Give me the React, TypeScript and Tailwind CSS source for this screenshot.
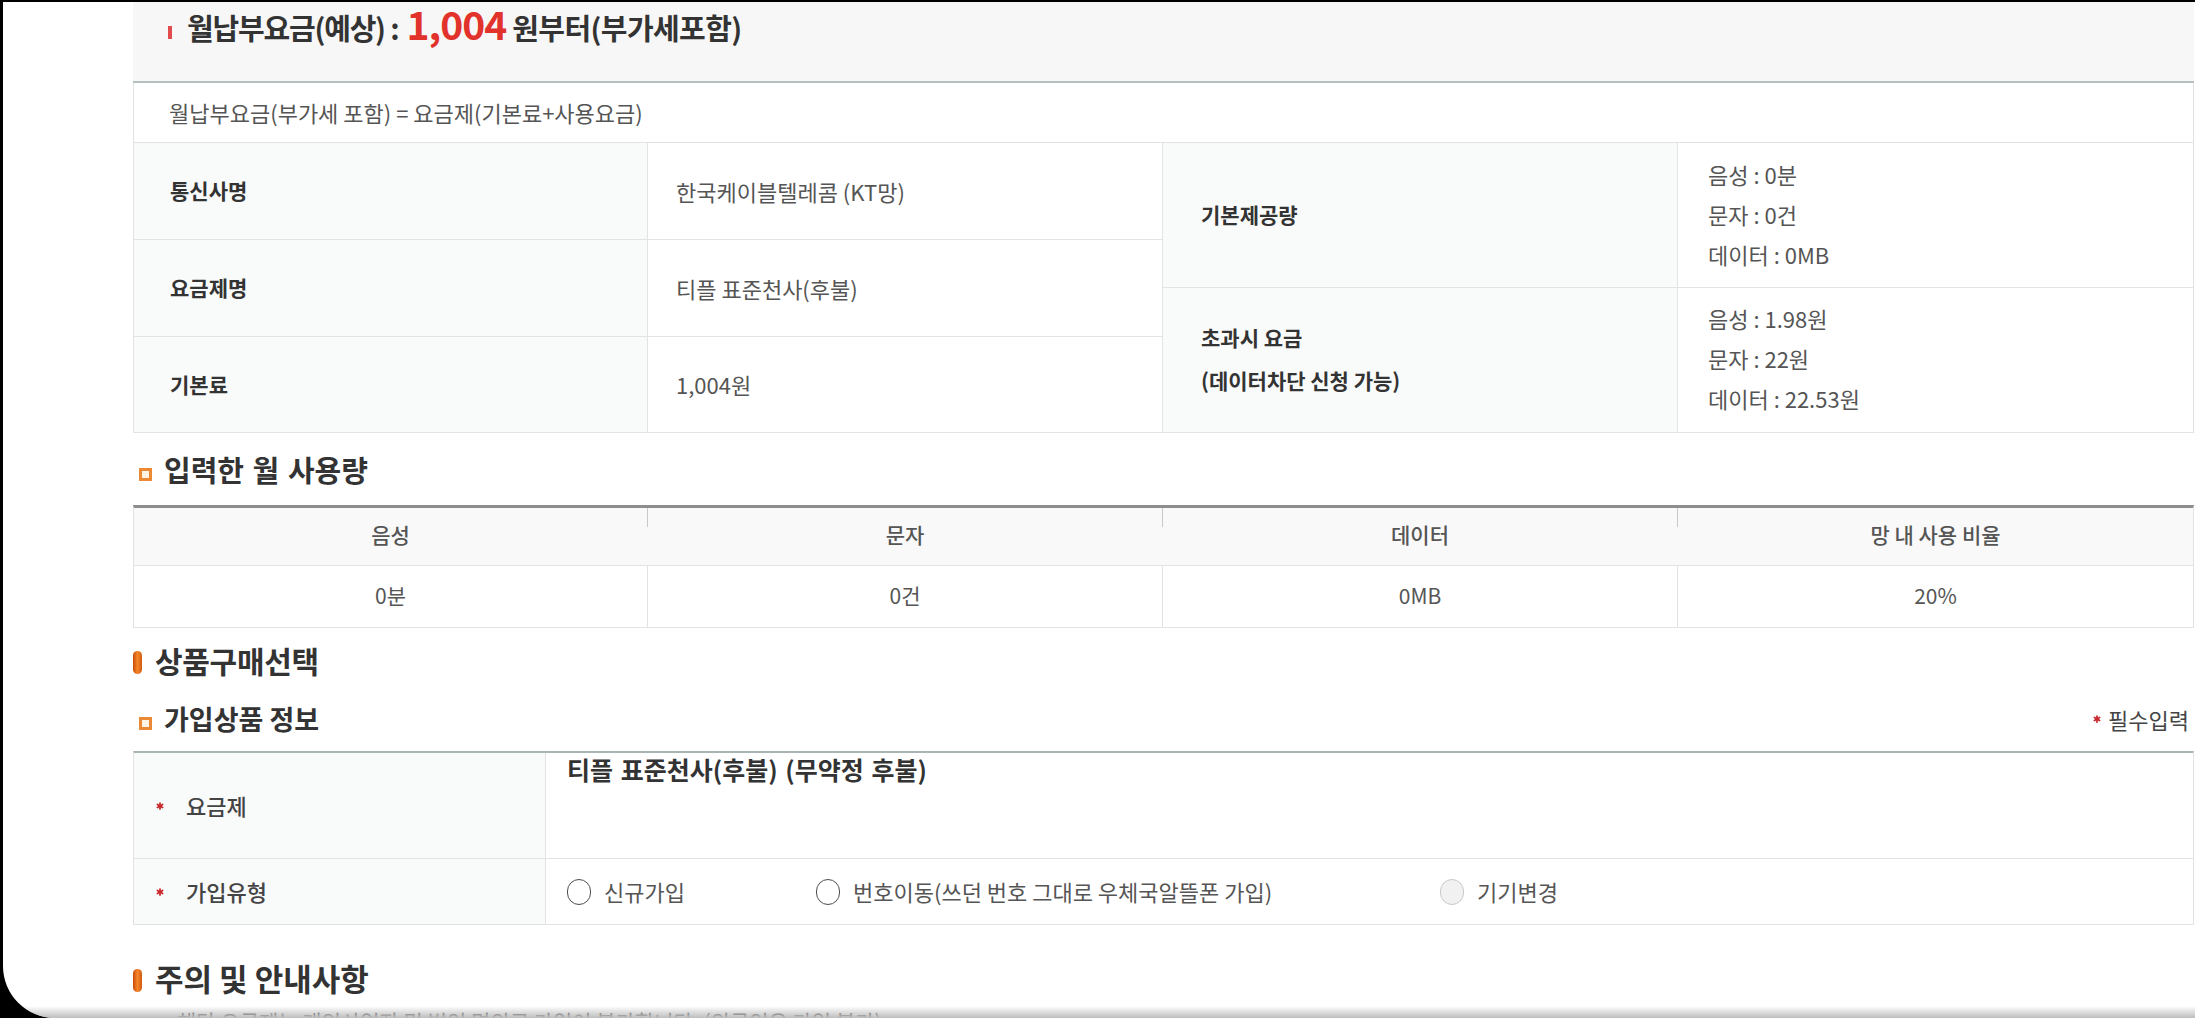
import React from "react";
import { Asterisk } from "lucide-react";

const FONT = "font-['Noto_Sans_CJK_KR','Noto_Sans',sans-serif]";

function OrangeSquare() {
  return (
    <span className="w-[13px] h-[13px] border-[3px] border-[#ea8a34] bg-[#fff3e6] shrink-0 mt-[8px]" />
  );
}

function OrangePill() {
  return (
    <span className="w-[9px] h-[23px] rounded-full bg-linear-to-r from-[#c94a00] via-[#f5862a] to-[#d05a10] shrink-0 mt-[4px]" />
  );
}

function Radio({ disabled }: { disabled?: boolean }) {
  return (
    <span
      className={
        disabled
          ? "w-[24px] h-[26px] rounded-full border-[1.5px] border-[#c9c9c9] bg-[#f1f1f1] shrink-0"
          : "w-[24px] h-[26px] rounded-full border-[1.5px] border-[#4d4d4d] bg-white shrink-0"
      }
    />
  );
}

function Req() {
  return <Asterisk size={12} strokeWidth={3.5} className="text-[#c9282d] shrink-0" />;
}

export default function App() {
  const leftRows = [
    ["통신사명", "한국케이블텔레콤 (KT망)", "h-[97px]"],
    ["요금제명", "티플 표준천사(후불)", "h-[97px]"],
    ["기본료", "1,004원", "h-[96px]"],
  ];
  return (
    <div className={`w-[2195px] h-[1018px] bg-black overflow-hidden pt-[2px] pl-[3px] ${FONT}`}>
      <div className="relative h-[1016px] bg-white rounded-bl-[52px] overflow-hidden">
        <div className="ml-[130px] w-[2061px]">
          {/* Header */}
          <div className="h-[81px] bg-[#f7f7f7] border-b-2 border-[#b4bfbf] flex items-baseline pl-[35px] leading-[1.1] font-bold text-[#333]">
            <span className="w-[4px] h-[13px] bg-[#e24b4b] mr-[15px] self-start mt-[24px]" />
            <span className="text-[29px] tracking-[-1.2px]">월납부요금(예상) :</span>
            <span className="text-[39px] text-[#e2322c] ml-[8px] mr-[6px] tracking-[-1px]">1,004</span>
            <span className="text-[29px] tracking-[-0.6px]">원부터(부가세포함)</span>
          </div>

          {/* Formula row */}
          <div className="h-[60px] border-x border-b border-[#e3e3e3] flex items-center pl-[35px] text-[22px] text-[#555]">
            월납부요금(부가세 포함) = 요금제(기본료+사용요금)
          </div>

          {/* Info table */}
          <div className="flex h-[290px] border-x border-[#e3e3e3]">
            <div className="flex flex-col w-[1029px]">
              {leftRows.map(([l, v, h]) => (
                <div key={l} className={`flex ${h} border-b border-[#e3e3e3]`}>
                  <div className="w-[514px] bg-[#f9fafa] border-r border-[#e3e3e3] flex items-center pl-[36px] text-[21px] font-bold text-[#333]">
                    {l}
                  </div>
                  <div className="w-[515px] border-r border-[#e3e3e3] flex items-center pl-[28px] text-[22px] text-[#555]">
                    {v}
                  </div>
                </div>
              ))}
            </div>
            <div className="flex flex-col flex-1">
              <div className="flex h-[145px] border-b border-[#e3e3e3]">
                <div className="w-[515px] bg-[#f9fafa] border-r border-[#e3e3e3] flex items-center pl-[38px] text-[21px] font-bold text-[#333]">
                  기본제공량
                </div>
                <div className="flex-1 flex flex-col justify-center pl-[30px] pb-[2px] text-[22px] leading-[40px] text-[#555]">
                  <div>음성 : 0분</div>
                  <div>문자 : 0건</div>
                  <div>데이터 : 0MB</div>
                </div>
              </div>
              <div className="flex h-[145px] border-b border-[#e3e3e3]">
                <div className="w-[515px] bg-[#f9fafa] border-r border-[#e3e3e3] flex flex-col justify-center pl-[38px] pb-[3px] text-[21px] leading-[43px] font-bold text-[#333]">
                  <div>초과시 요금</div>
                  <div>(데이터차단 신청 가능)</div>
                </div>
                <div className="flex-1 flex flex-col justify-center pl-[30px] pb-[4px] text-[22px] leading-[40px] text-[#555]">
                  <div>음성 : 1.98원</div>
                  <div>문자 : 22원</div>
                  <div>데이터 : 22.53원</div>
                </div>
              </div>
            </div>
          </div>

          {/* Usage heading */}
          <div className="h-[72px] flex items-center pt-[2px] pl-[6px] gap-[12px]">
            <OrangeSquare />
            <span className="text-[29px] font-bold text-[#333] [word-spacing:2px] leading-[1.3]">입력한 월 사용량</span>
          </div>

          {/* Usage table */}
          <div className="border-t-[3px] border-[#8e8e8e] border-x border-x-[#e3e3e3]">
            <div className="flex h-[58px] bg-[#f9f9f9] border-b border-[#e3e3e3] text-[21px] font-medium text-[#555]">
              <div className="w-[513px] flex items-center justify-center pb-[3px]">음성</div>
              <span className="w-px h-[19px] bg-[#c9c9c9]" />
              <div className="w-[514px] flex items-center justify-center pb-[3px]">문자</div>
              <span className="w-px h-[19px] bg-[#c9c9c9]" />
              <div className="w-[514px] flex items-center justify-center pb-[3px]">데이터</div>
              <span className="w-px h-[19px] bg-[#c9c9c9]" />
              <div className="flex-1 flex items-center justify-center pb-[3px]">망 내 사용 비율</div>
            </div>
            <div className="flex h-[62px] border-b border-[#e3e3e3] text-[21px] text-[#555]">
              <div className="w-[514px] border-r border-[#e3e3e3] flex items-center justify-center pb-[2px]">0분</div>
              <div className="w-[515px] border-r border-[#e3e3e3] flex items-center justify-center pb-[2px]">0건</div>
              <div className="w-[515px] border-r border-[#e3e3e3] flex items-center justify-center pb-[2px]">0MB</div>
              <div className="flex-1 flex items-center justify-center pb-[2px]">20%</div>
            </div>
          </div>

          {/* 상품구매선택 */}
          <div className="h-[65px] flex items-center gap-[13px]">
            <OrangePill />
            <span className="text-[30px] font-bold text-[#333] tracking-[-0.3px] leading-[1.3]">상품구매선택</span>
          </div>

          {/* 가입상품 정보 */}
          <div className="h-[58px] flex items-center pb-[6px] pl-[6px]">
            <OrangeSquare />
            <span className="ml-[12px] text-[27px] font-bold text-[#333] leading-[1.3]">가입상품 정보</span>
            <div className="ml-auto flex items-center gap-[5px] text-[22px] text-[#444] mr-[5px]">
              <Req />
              필수입력
            </div>
          </div>

          {/* Join table */}
          <div className="border-t-2 border-[#a9b4b4] border-x border-x-[#e3e3e3]">
            <div className="flex h-[106px] border-b border-[#e3e3e3]">
              <div className="w-[412px] bg-[#f9fafa] border-r border-[#e3e3e3] flex items-center pl-[20px] gap-[20px] text-[22px] font-medium text-[#444]">
                <Req />
                요금제
              </div>
              <div className="flex-1 pl-[21px] pt-[0px] text-[25px] leading-[32px] font-bold text-[#333] [word-spacing:2px]">
                티플 표준천사(후불) (무약정 후불)
              </div>
            </div>
            <div className="flex h-[66px] border-b border-[#e3e3e3]">
              <div className="w-[412px] bg-[#f9fafa] border-r border-[#e3e3e3] flex items-center pl-[20px] gap-[20px] text-[22px] font-medium text-[#444]">
                <Req />
                가입유형
              </div>
              <div className="flex-1 flex items-center pl-[21px] text-[22px] text-[#555]">
                <div className="w-[249px] flex items-center gap-[13px]">
                  <Radio />
                  <span>신규가입</span>
                </div>
                <div className="w-[624px] flex items-center gap-[13px]">
                  <Radio />
                  <span>번호이동(쓰던 번호 그대로 우체국알뜰폰 가입)</span>
                </div>
                <div className="flex items-center gap-[13px]">
                  <Radio disabled />
                  <span>기기변경</span>
                </div>
              </div>
            </div>
          </div>

          {/* 주의 및 안내사항 */}
          <div className="h-[86px] flex items-center pt-[20px] gap-[13px]">
            <OrangePill />
            <span className="text-[31px] font-bold text-[#333] leading-[1.3]">주의 및 안내사항</span>
          </div>
          <div className="pl-[32px] text-[21px] leading-[20px] text-[#444]">
            - 해당 요금제는 개인사업자 및 법인 명의로 가입이 불가합니다. (외국인은 가입 불가)
          </div>
        </div>
        <div className="absolute bottom-0 left-0 right-0 h-[12px] bg-linear-to-b from-[#ffffff00] to-[#bdbdbd]" />
      </div>
    </div>
  );
}
